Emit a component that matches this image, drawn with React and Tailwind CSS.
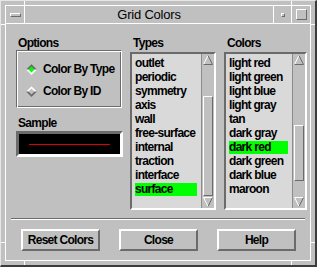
const raised =
  "border-2 border-t-white border-l-white border-r-[#6b6b6b] border-b-[#6b6b6b]";
const raisedThin =
  "border border-t-white border-l-white border-r-[#6b6b6b] border-b-[#6b6b6b]";
const sunken =
  "border-2 border-t-[#6b6b6b] border-l-[#6b6b6b] border-r-white border-b-white";

const types = [
  "outlet",
  "periodic",
  "symmetry",
  "axis",
  "wall",
  "free-surface",
  "internal",
  "traction",
  "interface",
  "surface",
];

const colors = [
  "light red",
  "light green",
  "light blue",
  "light gray",
  "tan",
  "dark gray",
  "dark red",
  "dark green",
  "dark blue",
  "maroon",
];

const Diamond = ({ on }) => (
  <svg width="11" height="11" viewBox="0 0 11 11">
    <polygon points="5.5,0 11,5.5 5.5,11 0,5.5" fill={on ? "#ffffff" : "#6b6b6b"} />
    <polygon points="0,5.5 5.5,0 11,5.5" fill={on ? "#6b6b6b" : "#ffffff"} />
    <polygon
      points="5.5,2.5 8.5,5.5 5.5,8.5 2.5,5.5"
      fill={on ? "#00ff00" : "#c0c0c0"}
    />
  </svg>
);

const Arrow = ({ down }) =>
  down ? (
    <svg width="10" height="10" viewBox="0 0 10 10">
      <line x1="0.5" y1="0.5" x2="9.5" y2="0.5" stroke="#ffffff" />
      <line x1="0.5" y1="0.5" x2="5" y2="9.5" stroke="#ffffff" />
      <line x1="9.5" y1="0.5" x2="5" y2="9.5" stroke="#6b6b6b" />
    </svg>
  ) : (
    <svg width="10" height="10" viewBox="0 0 10 10">
      <line x1="5" y1="0.5" x2="0.5" y2="9.5" stroke="#ffffff" />
      <line x1="5" y1="0.5" x2="9.5" y2="9.5" stroke="#6b6b6b" />
      <line x1="0.5" y1="9.5" x2="9.5" y2="9.5" stroke="#6b6b6b" />
    </svg>
  );

const ScrollList = ({ items, selected, thumb }) => (
  <div className={`flex h-[158px] bg-[#d9d9d9] ${sunken}`}>
    <div className="flex-1 pt-[2px]">
      {items.map((it) => (
        <div
          key={it}
          className={`my-[1px] ml-[3px] mr-[4px] h-[13px] leading-[13px] whitespace-nowrap ${
            it === selected ? "bg-[#00ff00]" : ""
          }`}
        >
          {it}
        </div>
      ))}
    </div>
    <div className="flex w-[13px] flex-col border-l border-l-[#8c8c8c] bg-[#c0c0c0]">
      <div className="flex h-[12px] items-center justify-center">
        <Arrow />
      </div>
      <div className="flex flex-1 flex-col px-[1px]">
        <div className={`${raisedThin} ${thumb}`} />
      </div>
      <div className="flex h-[12px] items-center justify-center">
        <Arrow down />
      </div>
    </div>
  </div>
);

const Button = ({ children }) => (
  <div
    className={`flex h-[22px] w-[79px] items-center justify-center bg-[#c0c0c0] ${raised}`}
  >
    {children}
  </div>
);

export default function App() {
  return (
    <div className="relative h-[267px] w-[317px] border-l border-t border-r-2 border-b-2 border-l-[#e6e6e6] border-t-[#e6e6e6] border-r-[#3c3c3c] border-b-[#3c3c3c] bg-[#c0c0c0] p-[4px] font-['Liberation_Sans',Arial,sans-serif] text-black">
      {/* resize handle ticks */}
      <span className="absolute left-[23px] top-0 h-[4px] w-px bg-white" />
      <span className="absolute left-[290px] top-0 h-[4px] w-px bg-white" />
      <span className="absolute bottom-0 left-[23px] h-[4px] w-px bg-white" />
      <span className="absolute bottom-0 left-[290px] h-[4px] w-px bg-white" />
      <span className="absolute left-0 top-[23px] h-px w-[4px] bg-white" />
      <span className="absolute left-0 top-[241px] h-px w-[4px] bg-white" />
      <span className="absolute right-0 top-[23px] h-px w-[4px] bg-white" />
      <span className="absolute right-0 top-[241px] h-px w-[4px] bg-white" />

      <div className="flex h-full flex-col border border-white">
        {/* title bar */}
        <div className="flex h-[18px] border-b border-b-white">
          <div className="flex w-[19px] items-center justify-center border-r border-r-white">
            <div className={`h-[4px] w-[11px] ${raisedThin}`} />
          </div>
          <div className="flex flex-1 items-center justify-center text-[13px] leading-[17px] tracking-[-0.2px]">
            Grid Colors
          </div>
          <div className="flex w-[18px] items-center justify-center border-l border-l-white">
            <div className={`h-[4px] w-[4px] ${raisedThin}`} />
          </div>
          <div className="flex w-[19px] items-center justify-center border-l border-l-white">
            <div className={`h-[11px] w-[11px] ${raisedThin}`} />
          </div>
        </div>

        {/* body */}
        <div className="flex flex-1 flex-col text-[12px] font-bold tracking-[-0.7px]">
          <div className="flex pl-[10px] pt-[12px]">
            <div className="flex w-[107px] flex-col">
              <div className="h-[14px] pl-[2px] leading-[14px]">Options</div>
              <div className="h-[58px] w-[106px] border border-t-[#6b6b6b] border-l-[#6b6b6b] border-r-white border-b-white pl-[9px] pt-[7px] shadow-[inset_1px_1px_0_#ffffff,inset_-1px_-1px_0_#6b6b6b]">
                <div className="flex h-[22px] items-center gap-[6px]">
                  <Diamond on />
                  <span>Color By Type</span>
                </div>
                <div className="flex h-[22px] items-center gap-[6px]">
                  <Diamond />
                  <span>Color By ID</span>
                </div>
              </div>
              <div className="mt-[8px] h-[14px] pl-[2px] leading-[14px]">Sample</div>
              <div className="mt-[1px] flex h-[26px] items-center border-[3px] border-t-[#6b6b6b] border-l-[#6b6b6b] border-r-white border-b-white bg-black px-[10px]">
                <div className="h-px flex-1 bg-[#e00000]" />
              </div>
            </div>

            <div className="ml-[7px] flex w-[86px] flex-col">
              <div className="mb-[2px] h-[14px] pl-[3px] leading-[14px]">Types</div>
              <ScrollList items={types} selected="surface" thumb="mt-[30px] flex-1" />
            </div>

            <div className="ml-[8px] flex w-[83px] flex-col">
              <div className="mb-[2px] h-[14px] pl-[3px] leading-[14px]">Colors</div>
              <ScrollList items={colors} selected="dark red" thumb="mt-[59px] h-[56px]" />
            </div>
          </div>

          <div className="mx-[5px] mt-[8px] h-[2px] border-t border-b border-t-[#6b6b6b] border-b-white" />

          <div className="mt-[9px] flex gap-[19px] pl-[15px]">
            <Button>Reset Colors</Button>
            <Button>Close</Button>
            <Button>Help</Button>
          </div>
        </div>
      </div>
    </div>
  );
}
